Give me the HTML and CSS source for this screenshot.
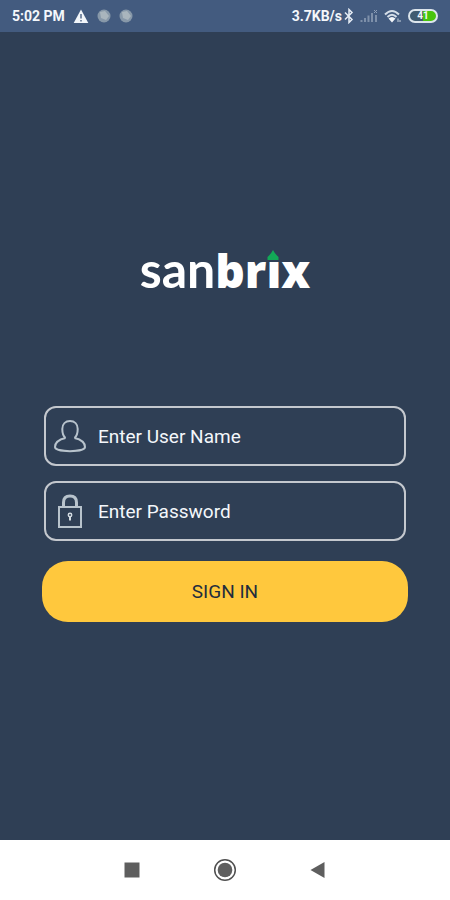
FILE: index.html
```html
<!DOCTYPE html>
<html lang="en">
<head>
    <meta charset="UTF-8">
    <meta name="viewport" content="width=device-width, initial-scale=1.0">
    <title>Sanbrix - Sign In</title>
    <link rel="stylesheet" href="styles.css">
</head>
<body>
    <!-- Status bar -->
    <header class="status-bar">
        <div class="status-left">
            <span>5:02 PM</span>
            <svg width="16" height="16" viewBox="0 0 16 16">
                <path d="M8 1.5L15.3 15H.7z" fill="#f2f6fa"/>
                <path d="M8 6v4.5M8 12v1.6" stroke="#566b8b" stroke-width="1.5"/>
            </svg>
            <svg class="status-dot" width="14" height="14" viewBox="0 0 14 14">
                <circle cx="7" cy="7" r="6.5" fill="#8798a9"/>
                <path d="M3 3l5-1 4 5-3 4-5-2z" fill="#a9b5bd"/>
            </svg>
            <svg class="status-dot" width="14" height="14" viewBox="0 0 14 14">
                <circle cx="7" cy="7" r="6.5" fill="#8798a9"/>
                <path d="M3 3l5-1 4 5-3 4-5-2z" fill="#a9b5bd"/>
            </svg>
        </div>
        <div class="status-right">
            <span>3.7KB/s</span>
            <svg width="10" height="16" viewBox="0 0 10 16">
                <path d="M1 4.5l7 7L5 14.5v-13l3 3-7 7" fill="none" stroke="#e6edf5" stroke-width="1.5"/>
            </svg>
            <svg class="signal" width="18" height="14" viewBox="0 0 18 14">
                <path d="M1.5 11v2M5 9v4M8.5 6.5v6.5M12 4v9M16 6v7" stroke="#7e90aa" stroke-width="2"/>
                <path d="M14 1l3 3M17 1l-3 3" stroke="#8fa0b8"/>
            </svg>
            <svg class="wifi" width="18" height="14" viewBox="0 0 18 14">
                <path d="M1 5.5Q8 -1.5 15 5.5M3.5 8Q8 3.5 12.5 8" fill="none" stroke="#d5dee8" stroke-width="2"/>
                <path d="M4.5 9.5Q8 6.5 11.5 9.5L8 13.5z" fill="#f4f7fa"/>
                <path d="M14 9.5v3.5M16 11v2" stroke="#aab8c8" stroke-width="1.3"/>
            </svg>
            <span class="battery">41</span>
        </div>
    </header>

    <!-- Login screen -->
    <main class="login">
        <h1 class="logo">san<b>br<span class="logo-i">i<svg class="logo-roof" width="14" height="13" viewBox="0 0 14 13">
            <path d="M0 0h14v13H0z" fill="#2f3f55"/>
            <path d="M7 1Q9 5 12.5 8v3h-11V8Q5 5 7 1z" fill="#12a957"/>
        </svg></span>x</b></h1>

        <form class="login-form">
            <label class="field">
                <svg width="32" height="36" viewBox="0 0 32 36">
                    <path d="M11.5 20C9 18 8.3 14.500 8.3 11C8.3 6 11.5 3 16 3s7.700 3 7.700 8c0 3.500-.7 7-3.200 9" fill="none" stroke="#b8c3cc" stroke-width="2"/>
                    <path d="M11.5 20C5 21.500 1 25 1 29c0 5.500 30 5.500 30 0 0-4-4-7.500-10.500-9" fill="none" stroke="#b8c3cc" stroke-width="2"/>
                </svg>
                <input type="text" placeholder="Enter User Name" aria-label="Enter User Name">
            </label>
            <label class="field">
                <svg width="32" height="36" viewBox="0 0 32 36">
                    <path d="M5 14h22v20H5z" fill="none" stroke="#b8c3cc" stroke-width="2"/>
                    <path d="M9.500 14V9.500Q9.500 3 16 3t6.500 6.500V14" fill="none" stroke="#b8c3cc" stroke-width="3"/>
                    <circle cx="16" cy="22" r="1.7" fill="none" stroke="#d3dbe1" stroke-width="1.5"/>
                    <path d="M16 23.500v4" stroke="#d3dbe1" stroke-width="2"/>
                </svg>
                <input type="password" placeholder="Enter Password" aria-label="Enter Password">
            </label>
            <button type="button" class="sign-in">SIGN IN</button>
        </form>
    </main>

    <!-- System navigation -->
    <nav class="nav-bar">
        <button type="button" aria-label="Recent apps">
            <svg width="24" height="24" viewBox="0 0 24 24"><path d="M4.5 4.5h15v15h-15z" fill="#5e5e5e"/></svg>
        </button>
        <button type="button" aria-label="Home">
            <svg width="24" height="24" viewBox="0 0 24 24">
                <circle cx="12" cy="12" r="10.3" fill="none" stroke="#505050" stroke-width="1.5"/>
                <circle cx="12" cy="12" r="7.3" fill="#5e5e5e"/>
            </svg>
        </button>
        <button type="button" aria-label="Back">
            <svg width="24" height="24" viewBox="0 0 24 24"><path d="M4.5 12L18.5 4v16z" fill="#5e5e5e"/></svg>
        </button>
    </nav>
</body>
</html>
```

FILE: styles.css
```css
* {
    margin: 0;
    padding: 0;
    box-sizing: border-box;
}

body {
    display: flex;
    flex-direction: column;
    min-height: 100vh;
    font-family: Roboto, sans-serif;
    background: #2f3f55;
    color: #f4f7fb;
}

svg {
    display: block;
    flex-shrink: 0;
}

/* Status bar */
.status-bar {
    display: flex;
    justify-content: space-between;
    align-items: center;
    height: 32px;
    padding: 0 12px;
    background: #435b7f;
    font-size: 14px;
    font-weight: 700;
}

.status-left,
.status-right {
    display: flex;
    align-items: center;
}

.status-left {
    gap: 8px;
}

.status-right {
    gap: 2px;
}

.signal,
.wifi {
    margin-left: 4px;
}

.battery {
    width: 30px;
    height: 14px;
    margin-left: 4px;
    border: 2px solid #dce5ec;
    border-radius: 7px;
    background: linear-gradient(90deg, #3f5b70 50%, #48c40c 50%);
    font-size: 10px;
    line-height: 10px;
    text-align: center;
}

/* Login */
.login {
    flex: 1;
    display: flex;
    flex-direction: column;
    align-items: center;
    padding: 203px 42px 40px;
}

.logo {
    font-family: Lato, sans-serif;
    font-size: 50px;
    font-weight: 700;
    line-height: 68px;
    color: #fff;
}

.logo b {
    font-family: "Open Sans", sans-serif;
    font-size: 46px;
    font-weight: 800;
    line-height: 1;
}

.logo-i {
    position: relative;
}

/* green roof drawn over the dot of the i */
.logo-roof {
    position: absolute;
    top: 10px;
    left: 0;
}

.login-form {
    display: flex;
    flex-direction: column;
    width: 100%;
    margin-top: 103px;
}

.field {
    display: flex;
    align-items: center;
    gap: 12px;
    height: 60px;
    margin: 0 2px 15px;
    padding: 0 8px;
    border: 2px solid #c4c8ce;
    border-radius: 12px;
}

.field input {
    flex: 1;
    min-width: 0;
    border: 0;
    outline: 0;
    background: transparent;
    color: #f4f7fb;
    font-family: inherit;
    font-size: 19px;
}

.field input::placeholder {
    color: #f4f7fb;
    opacity: 1;
}

.sign-in {
    height: 61px;
    margin-top: 5px;
    border: 0;
    border-radius: 26px;
    background: #ffc83d;
    color: #1f2d3d;
    font-family: inherit;
    font-size: 19px;
    cursor: pointer;
}

/* System navigation */
.nav-bar {
    display: flex;
    justify-content: center;
    align-items: center;
    gap: 69px;
    height: 60px;
    background: #fff;
}

.nav-bar button {
    border: 0;
    background: none;
}
```
